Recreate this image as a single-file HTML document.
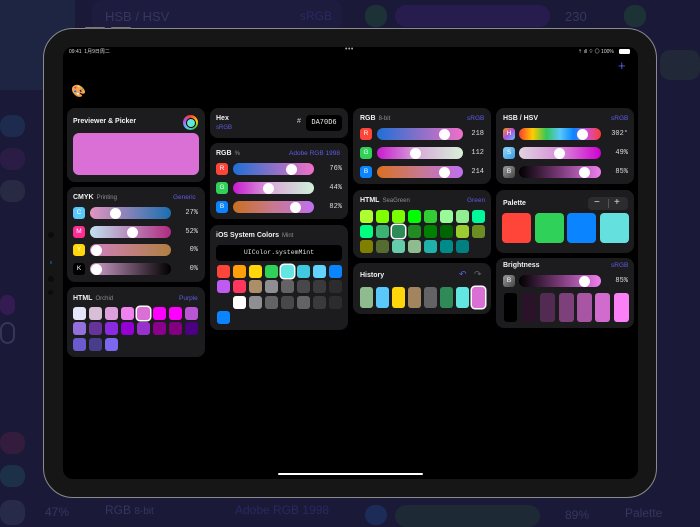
<!DOCTYPE html>
<html><head><meta charset="utf-8">
<style>
*{margin:0;padding:0;box-sizing:border-box}
body{width:700px;height:525px;overflow:hidden;background:#1a1938;font-family:"Liberation Sans","Noto Sans CJK SC",sans-serif;position:relative;color:#fff}
.a{position:absolute}
.bg{position:absolute;border-radius:10px}
.frame{position:absolute;left:43px;top:28px;width:614px;height:470px;background:#161616;border-radius:30px;border:1.5px solid #8a8a8e}
.screen{position:absolute;left:63px;top:47px;width:575px;height:432px;background:#000;border-radius:10px;overflow:hidden}
.p{position:absolute;background:#1c1c1e;border-radius:8px}
.t{position:absolute;font-size:7px;font-weight:bold;color:#f2f2f2;white-space:nowrap}
.s{font-weight:normal;color:#8e8e93;font-size:6px;margin-left:3px}
.ac{position:absolute;font-size:6.5px;color:#5e5ce6;white-space:nowrap}
.b{position:absolute;width:12px;height:12px;border-radius:3px;font-size:6.5px;color:#fff;text-align:center;line-height:12px}
.sl{position:absolute;height:12px;border-radius:6px}
.th{position:absolute;top:0.5px;width:11px;height:11px;border-radius:50%;background:#fff;margin-left:-5.5px}
.v{position:absolute;font-family:"Liberation Mono",monospace;font-size:7px;color:#ddd;text-align:right;width:30px}
.sw{position:absolute;width:12.5px;height:12.5px;border-radius:3px}
.sel{box-shadow:0 0 0 1.5px #fff}
</style></head><body>
<div class="bg" style="left:0;top:0;width:75px;height:90px;background:#1e2543;border-radius:0"></div>
<div class="bg" style="left:92px;top:0;width:250px;height:30px;background:#1d1c3e"></div>
<div class="a" style="left:105px;top:9px;font-size:13px;color:#36365e">HSB / HSV</div>
<div class="a" style="left:300px;top:9px;font-size:12px;color:#2a2860">sRGB</div>
<div class="bg" style="left:365px;top:5px;width:22px;height:22px;background:#1d3236"></div>
<div class="bg" style="left:395px;top:5px;width:155px;height:22px;background:#261d4e;border-radius:11px"></div>
<div class="a" style="left:565px;top:9px;font-size:13px;color:#36365e">230</div>
<div class="bg" style="left:624px;top:5px;width:22px;height:22px;background:#1d3236"></div>
<div class="bg" style="left:0;top:115px;width:25px;height:22px;background:#1c2b4e"></div>
<div class="bg" style="left:0;top:148px;width:25px;height:22px;background:#2a1c45"></div>
<div class="bg" style="left:0;top:180px;width:25px;height:22px;background:#272a42"></div>
<div class="bg" style="left:0;top:295px;width:15px;height:20px;background:#341c52"></div>
<div class="bg" style="left:0;top:322px;width:15px;height:22px;border:2px solid #363658"></div>
<div class="bg" style="left:0;top:432px;width:25px;height:22px;background:#341c3c"></div>
<div class="bg" style="left:0;top:465px;width:25px;height:22px;background:#1c3048"></div>
<div class="bg" style="left:0;top:500px;width:25px;height:25px;background:#282a4a"></div>
<div class="a" style="left:45px;top:505px;font-size:12px;color:#36365e">47%</div>
<div class="a" style="left:105px;top:503px;font-size:12px;color:#36365e">RGB <span style="font-size:10px">8-bit</span></div>
<div class="a" style="left:235px;top:503px;font-size:12px;color:#2a2860">Adobe RGB 1998</div>
<div class="bg" style="left:365px;top:505px;width:22px;height:20px;background:#1c2c58"></div>
<div class="bg" style="left:395px;top:505px;width:145px;height:22px;background:#1d2a36;border-radius:11px"></div>
<div class="a" style="left:565px;top:508px;font-size:12px;color:#36365e">89%</div>
<div class="a" style="left:625px;top:506px;font-size:12px;color:#36365e">Palette</div>
<div class="bg" style="left:660px;top:50px;width:40px;height:30px;background:#212838"></div>

<div class="frame"></div>
<div class="a" style="left:85px;top:27px;width:20px;height:2px;background:#777;border-radius:1px"></div>
<div class="a" style="left:111px;top:27px;width:20px;height:2px;background:#777;border-radius:1px"></div>
<div class="a" style="left:48px;top:232px;width:6px;height:6px;border-radius:50%;background:#0c0c0c"></div>
<div class="a" style="left:50px;top:261px;width:2px;height:3px;background:#1a3a7a"></div>
<div class="a" style="left:48px;top:276px;width:6px;height:6px;border-radius:50%;background:#0c0c0c"></div>
<div class="a" style="left:48px;top:290px;width:5px;height:5px;border-radius:50%;background:#0c0c0c"></div>

<div class="screen"></div>
<div class="a" style="left:69px;top:48px;font-size:5px;color:#ddd">09:41&nbsp; 1月9日周二</div>
<div class="a" style="left:345px;top:46px;font-size:7px;color:#aaa;letter-spacing:0.5px">•••</div>
<div class="a" style="left:578px;top:48px;font-size:5px;color:#ddd">⇡ ıll ⌔ ◎ 100%</div>
<div class="a" style="left:619px;top:49px;width:11px;height:5px;background:#fff;border-radius:1.5px"></div>
<div class="a" style="left:618px;top:58px;font-size:13px;color:#5e5ce6">+</div>
<div class="a" style="left:71px;top:84px;font-size:12px">🎨</div>
<div class="a" style="left:278px;top:473px;width:145px;height:2px;background:#fff;border-radius:1px"></div>

<div class="p" style="left:67px;top:108px;width:138px;height:74px"></div>
<div class="t" style="left:73px;top:118px">Previewer &amp; Picker</div>
<div class="a" style="left:183px;top:115px;width:15px;height:15px;border-radius:50%;background:conic-gradient(#ff3b30,#ffcc00,#34c759,#5ac8fa,#af52de,#ff3b30)"></div>
<div class="a" style="left:185.5px;top:117.5px;width:10px;height:10px;border-radius:50%;background:#63e6dc;border:1px solid #000"></div>
<div class="a" style="left:73px;top:133px;width:126px;height:42px;border-radius:6px;background:#da70d6"></div>

<div class="p" style="left:67px;top:187px;width:138px;height:95px"></div>
<div class="t" style="left:73px;top:194px">CMYK<span class="s">Printing</span></div>
<div class="ac" style="left:173px;top:194px">Generic</div>
<div class="b" style="left:73px;top:207px;background:#5ac8fa">C</div>
<div class="sl" style="left:90px;top:207px;width:81px;background:linear-gradient(90deg,#e494c0,#1a6fb0)"><div class="th" style="left:31%"></div></div>
<div class="v" style="left:168px;top:209px">27%</div>
<div class="b" style="left:73px;top:226px;background:#ff2d92">M</div>
<div class="sl" style="left:90px;top:226px;width:81px;background:linear-gradient(90deg,#c0e2f0,#b02a80)"><div class="th" style="left:52%"></div></div>
<div class="v" style="left:168px;top:228px">52%</div>
<div class="b" style="left:73px;top:244px;background:#ffd60a">Y</div>
<div class="sl" style="left:90px;top:244px;width:81px;background:linear-gradient(90deg,#d080c0,#b08040)"><div class="th" style="left:8%"></div></div>
<div class="v" style="left:168px;top:246px">0%</div>
<div class="b" style="left:73px;top:263px;background:#000">K</div>
<div class="sl" style="left:90px;top:263px;width:81px;background:linear-gradient(90deg,#d4a0d0,#000)"><div class="th" style="left:8%"></div></div>
<div class="v" style="left:168px;top:265px">0%</div>

<div class="p" style="left:67px;top:287px;width:138px;height:70px"></div>
<div class="t" style="left:73px;top:295px">HTML<span class="s">Orchid</span></div>
<div class="ac" style="left:179px;top:295px">Purple</div>
<div class="sw" style="left:73px;top:307px;background:#e6e6fa"></div>
<div class="sw" style="left:89px;top:307px;background:#d8bfd8"></div>
<div class="sw" style="left:105px;top:307px;background:#dda0dd"></div>
<div class="sw" style="left:121px;top:307px;background:#ee82ee"></div>
<div class="sw sel" style="left:137px;top:307px;background:#da70d6"></div>
<div class="sw" style="left:153px;top:307px;background:#ff00ff"></div>
<div class="sw" style="left:169px;top:307px;background:#ff00ff"></div>
<div class="sw" style="left:185px;top:307px;background:#ba55d3"></div>
<div class="sw" style="left:73px;top:322px;background:#9370db"></div>
<div class="sw" style="left:89px;top:322px;background:#663399"></div>
<div class="sw" style="left:105px;top:322px;background:#8a2be2"></div>
<div class="sw" style="left:121px;top:322px;background:#9400d3"></div>
<div class="sw" style="left:137px;top:322px;background:#9932cc"></div>
<div class="sw" style="left:153px;top:322px;background:#8b008b"></div>
<div class="sw" style="left:169px;top:322px;background:#800080"></div>
<div class="sw" style="left:185px;top:322px;background:#4b0082"></div>
<div class="sw" style="left:73px;top:338px;background:#6a5acd"></div>
<div class="sw" style="left:89px;top:338px;background:#483d8b"></div>
<div class="sw" style="left:105px;top:338px;background:#7b68ee"></div>

<div class="p" style="left:210px;top:108px;width:138px;height:30px"></div>
<div class="t" style="left:216px;top:115px">Hex</div>
<div class="ac" style="left:216px;top:125px;font-size:6px">sRGB</div>
<div class="a" style="left:297px;top:118px;font-size:7px;color:#ccc">#</div>
<div class="a" style="left:306px;top:115px;width:36px;height:16px;background:#000;border-radius:4px;font-family:'Liberation Mono',monospace;font-size:7px;color:#eee;text-align:center;line-height:16px">DA70D6</div>

<div class="p" style="left:210px;top:143px;width:138px;height:76px"></div>
<div class="t" style="left:216px;top:150px">RGB<span class="s">%</span></div>
<div class="ac" style="left:289px;top:150px">Adobe RGB 1998</div>
<div class="b" style="left:216px;top:163px;background:#ff453a">R</div>
<div class="sl" style="left:233px;top:163px;width:81px;background:linear-gradient(90deg,#1f6fd6,#8a70c8,#f070c8)"><div class="th" style="left:72%"></div></div>
<div class="v" style="left:312px;top:165px">76%</div>
<div class="b" style="left:216px;top:182px;background:#30d158">G</div>
<div class="sl" style="left:233px;top:182px;width:81px;background:linear-gradient(90deg,#c81ad0,#d8b0d8,#d0f0d8)"><div class="th" style="left:44%"></div></div>
<div class="v" style="left:312px;top:184px">44%</div>
<div class="b" style="left:216px;top:201px;background:#0a84ff">B</div>
<div class="sl" style="left:233px;top:201px;width:81px;background:linear-gradient(90deg,#c87020,#c87890,#c070f0)"><div class="th" style="left:77%"></div></div>
<div class="v" style="left:312px;top:203px">82%</div>

<div class="p" style="left:210px;top:225px;width:138px;height:105px"></div>
<div class="t" style="left:216px;top:232px">iOS System Colors<span class="s">Mint</span></div>
<div class="a" style="left:216px;top:245px;width:126px;height:16px;background:#000;border-radius:4px;font-family:'Liberation Mono',monospace;font-size:6.5px;color:#ddd;text-align:center;line-height:16px">UIColor.systemMint</div>
<div class="sw" style="left:217px;top:265px;background:#ff453a"></div>
<div class="sw" style="left:233px;top:265px;background:#ff9f0a"></div>
<div class="sw" style="left:249px;top:265px;background:#ffd60a"></div>
<div class="sw" style="left:265px;top:265px;background:#30d158"></div>
<div class="sw sel" style="left:281px;top:265px;background:#63e6e2"></div>
<div class="sw" style="left:297px;top:265px;background:#40c8e0"></div>
<div class="sw" style="left:313px;top:265px;background:#64d2ff"></div>
<div class="sw" style="left:329px;top:265px;background:#0a84ff"></div>
<div class="sw" style="left:217px;top:280px;background:#bf5af2"></div>
<div class="sw" style="left:233px;top:280px;background:#ff375f"></div>
<div class="sw" style="left:249px;top:280px;background:#ac8e68"></div>
<div class="sw" style="left:265px;top:280px;background:#8e8e93"></div>
<div class="sw" style="left:281px;top:280px;background:#636366"></div>
<div class="sw" style="left:297px;top:280px;background:#48484a"></div>
<div class="sw" style="left:313px;top:280px;background:#3a3a3c"></div>
<div class="sw" style="left:329px;top:280px;background:#2c2c2e"></div>
<div class="sw" style="left:233px;top:296px;background:#fff"></div>
<div class="sw" style="left:249px;top:296px;background:#8e8e93"></div>
<div class="sw" style="left:265px;top:296px;background:#636366"></div>
<div class="sw" style="left:281px;top:296px;background:#48484a"></div>
<div class="sw" style="left:297px;top:296px;background:#636366"></div>
<div class="sw" style="left:313px;top:296px;background:#3a3a3c"></div>
<div class="sw" style="left:329px;top:296px;background:#2c2c2e"></div>
<div class="sw" style="left:217px;top:311px;background:#0a84ff"></div>

<div class="p" style="left:353px;top:108px;width:138px;height:76px"></div>
<div class="t" style="left:360px;top:115px">RGB<span class="s">8-bit</span></div>
<div class="ac" style="left:467px;top:115px">sRGB</div>
<div class="b" style="left:360px;top:128px;background:#ff453a">R</div>
<div class="sl" style="left:377px;top:128px;width:86px;background:linear-gradient(90deg,#1f6fd6,#8a70c8,#f070c8)"><div class="th" style="left:79%"></div></div>
<div class="v" style="left:454px;top:130px">218</div>
<div class="b" style="left:360px;top:147px;background:#30d158">G</div>
<div class="sl" style="left:377px;top:147px;width:86px;background:linear-gradient(90deg,#c81ad0,#d8b0d8,#d8f0d8)"><div class="th" style="left:45%"></div></div>
<div class="v" style="left:454px;top:149px">112</div>
<div class="b" style="left:360px;top:166px;background:#0a84ff">B</div>
<div class="sl" style="left:377px;top:166px;width:86px;background:linear-gradient(90deg,#d87020,#c87890,#c070f0)"><div class="th" style="left:79%"></div></div>
<div class="v" style="left:454px;top:168px">214</div>

<div class="p" style="left:353px;top:190px;width:138px;height:68px"></div>
<div class="t" style="left:360px;top:197px">HTML<span class="s">SeaGreen</span></div>
<div class="ac" style="left:467px;top:197px">Green</div>
<div class="sw" style="left:360px;top:210px;background:#adff2f"></div>
<div class="sw" style="left:376px;top:210px;background:#7fff00"></div>
<div class="sw" style="left:392px;top:210px;background:#7cfc00"></div>
<div class="sw" style="left:408px;top:210px;background:#00ff00"></div>
<div class="sw" style="left:424px;top:210px;background:#32cd32"></div>
<div class="sw" style="left:440px;top:210px;background:#98fb98"></div>
<div class="sw" style="left:456px;top:210px;background:#90ee90"></div>
<div class="sw" style="left:472px;top:210px;background:#00fa9a"></div>
<div class="sw" style="left:360px;top:225px;background:#00ff7f"></div>
<div class="sw" style="left:376px;top:225px;background:#3cb371"></div>
<div class="sw sel" style="left:392px;top:225px;background:#2e8b57"></div>
<div class="sw" style="left:408px;top:225px;background:#228b22"></div>
<div class="sw" style="left:424px;top:225px;background:#008000"></div>
<div class="sw" style="left:440px;top:225px;background:#006400"></div>
<div class="sw" style="left:456px;top:225px;background:#9acd32"></div>
<div class="sw" style="left:472px;top:225px;background:#6b8e23"></div>
<div class="sw" style="left:360px;top:240px;background:#808000"></div>
<div class="sw" style="left:376px;top:240px;background:#556b2f"></div>
<div class="sw" style="left:392px;top:240px;background:#66cdaa"></div>
<div class="sw" style="left:408px;top:240px;background:#8fbc8f"></div>
<div class="sw" style="left:424px;top:240px;background:#20b2aa"></div>
<div class="sw" style="left:440px;top:240px;background:#008b8b"></div>
<div class="sw" style="left:456px;top:240px;background:#008080"></div>

<div class="p" style="left:353px;top:263px;width:138px;height:51px"></div>
<div class="t" style="left:360px;top:272px">History</div>
<div class="a" style="left:459px;top:269px;font-size:9px;color:#5e5ce6">↶</div>
<div class="a" style="left:474px;top:269px;font-size:9px;color:#666">↷</div>
<div class="sw" style="left:360px;top:287px;height:21px;background:#8fbc8f"></div>
<div class="sw" style="left:376px;top:287px;height:21px;background:#5ac8fa"></div>
<div class="sw" style="left:392px;top:287px;height:21px;background:#ffd60a"></div>
<div class="sw" style="left:408px;top:287px;height:21px;background:#a2845e"></div>
<div class="sw" style="left:424px;top:287px;height:21px;background:#636366"></div>
<div class="sw" style="left:440px;top:287px;height:21px;background:#2e8b57"></div>
<div class="sw" style="left:456px;top:287px;height:21px;background:#63e6e2"></div>
<div class="sw sel" style="left:472px;top:287px;height:21px;background:#da70d6"></div>

<div class="p" style="left:496px;top:108px;width:138px;height:76px"></div>
<div class="t" style="left:503px;top:115px">HSB / HSV</div>
<div class="ac" style="left:611px;top:115px">sRGB</div>
<div class="b" style="left:503px;top:128px;background:linear-gradient(135deg,#ff9500,#af52de,#5ac8fa)">H</div>
<div class="sl" style="left:519px;top:128px;width:82px;background:linear-gradient(90deg,#ff3b30,#ffcc00,#34c759,#5ac8fa,#0a84ff,#d050d0,#ff3b30)"><div class="th" style="left:78%"></div></div>
<div class="v" style="left:598px;top:130px">302°</div>
<div class="b" style="left:503px;top:147px;background:linear-gradient(135deg,#8fd8ff,#3a9ae0)">S</div>
<div class="sl" style="left:519px;top:147px;width:82px;background:linear-gradient(90deg,#e0d4e0,#d88ed8,#d000d0)"><div class="th" style="left:49%"></div></div>
<div class="v" style="left:598px;top:149px">49%</div>
<div class="b" style="left:503px;top:166px;background:linear-gradient(135deg,#999,#444)">B</div>
<div class="sl" style="left:519px;top:166px;width:82px;background:linear-gradient(90deg,#000,#7a3a78,#f080f0)"><div class="th" style="left:80%"></div></div>
<div class="v" style="left:598px;top:168px">85%</div>

<div class="p" style="left:496px;top:190px;width:138px;height:63px"></div>
<div class="t" style="left:503px;top:200px">Palette</div>
<div class="a" style="left:588px;top:197px;width:40px;height:13px;background:#2c2c2e;border-radius:4px"></div>
<div class="a" style="left:594px;top:197px;font-size:10px;line-height:12px;color:#ddd">−</div>
<div class="a" style="left:608px;top:199px;width:0.5px;height:9px;background:#555"></div>
<div class="a" style="left:614px;top:197px;font-size:10px;line-height:12px;color:#ddd">+</div>
<div class="a" style="left:502px;top:213px;width:29px;height:30px;border-radius:4px;background:#ff453a"></div>
<div class="a" style="left:535px;top:213px;width:29px;height:30px;border-radius:4px;background:#30d158"></div>
<div class="a" style="left:567px;top:213px;width:29px;height:30px;border-radius:4px;background:#0a84ff"></div>
<div class="a" style="left:600px;top:213px;width:29px;height:30px;border-radius:4px;background:#64e0de"></div>

<div class="p" style="left:496px;top:258px;width:138px;height:70px"></div>
<div class="t" style="left:503px;top:262px">Brightness</div>
<div class="ac" style="left:611px;top:262px">sRGB</div>
<div class="b" style="left:503px;top:275px;background:linear-gradient(135deg,#999,#444)">B</div>
<div class="sl" style="left:519px;top:275px;width:82px;background:linear-gradient(90deg,#000,#7a3a78,#f080f0)"><div class="th" style="left:80%"></div></div>
<div class="v" style="left:598px;top:277px">85%</div>
<div class="a" style="left:504px;top:293px;width:13px;height:29px;border-radius:3px;background:#000"></div>
<div class="a" style="left:522px;top:293px;width:15px;height:29px;border-radius:3px;background:#2a1229"></div>
<div class="a" style="left:540px;top:293px;width:15px;height:29px;border-radius:3px;background:#532a52"></div>
<div class="a" style="left:559px;top:293px;width:15px;height:29px;border-radius:3px;background:#7d407b"></div>
<div class="a" style="left:577px;top:293px;width:15px;height:29px;border-radius:3px;background:#a855a4"></div>
<div class="a" style="left:595px;top:293px;width:15px;height:29px;border-radius:3px;background:#d16bcd"></div>
<div class="a" style="left:614px;top:293px;width:15px;height:29px;border-radius:3px;background:#fb80f5"></div>
</body></html>
